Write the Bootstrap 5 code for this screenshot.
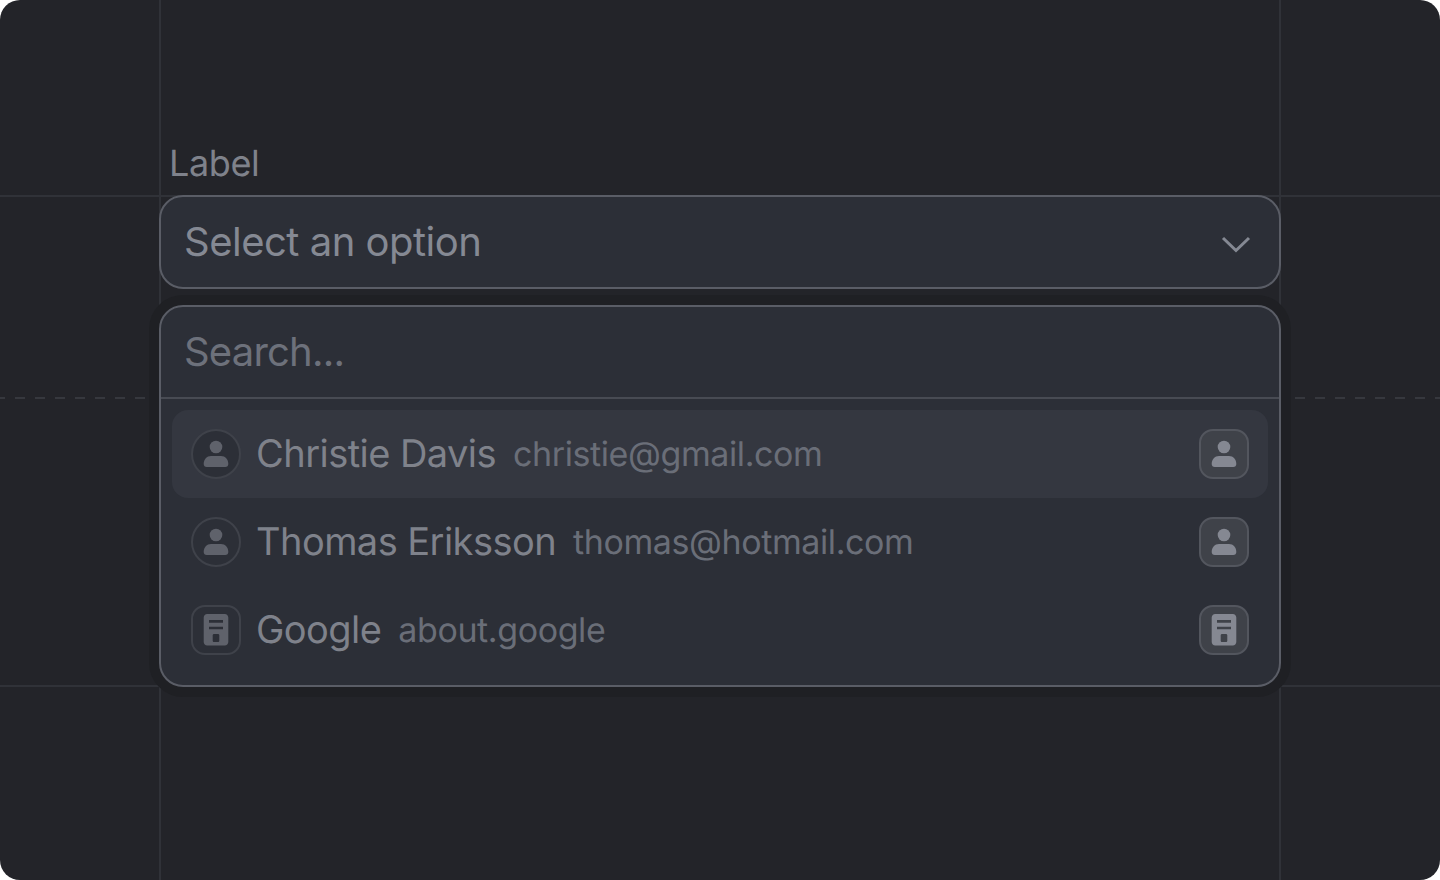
<!DOCTYPE html>
<html lang="en">
<head>
    <meta charset="UTF-8">
    <meta name="viewport" content="width=device-width, initial-scale=1.0">
    <title>Select</title>
    <link href="https://cdn.jsdelivr.net/npm/bootstrap@5.3.0/dist/css/bootstrap.min.css" rel="stylesheet">
    <style>
        html, body { height: 100%; background: #fff; overflow: hidden; }
        body { font-family: Inter, "Liberation Sans", sans-serif; text-rendering: geometricPrecision; }
        .stage { width: 1440px; height: 880px; background: #232429; border-radius: 20px; padding: 141px 159px 0; }
        .guide { position: absolute; background: #303238; }
        .guide-v { top: 0; bottom: 0; width: 2px; }
        .guide-h { left: 0; right: 0; height: 2px; }
        .guide-dash { left: 0; width: 160px; height: 2px; top: 397px; background: repeating-linear-gradient(90deg, #36383e 0 10px, transparent 10px 20px) 15px 0; }
        .guide-dash.right { left: auto; right: 0; }
        .field-label { display: block; margin: 0 0 10px 10px; font-size: 36px; line-height: 44px; letter-spacing: -.4px; color: #7f828b; }
        .picker { position: relative; z-index: 1; }
        .trigger { height: 94px; padding: 0 28px 0 23px; background: #2c2f37; border: 2px solid #5a5d66; border-radius: 24px; font-size: 40px; color: #858993; letter-spacing: -.5px; }
        .trigger:hover, .trigger:active { background: #2c2f37 !important; border-color: #5a5d66 !important; color: #858993 !important; }
        .trigger svg { margin-top: 3px; }
        .panel { margin-top: 16px; height: 382px; background: #2c2f37; border: 2px solid #5a5d66; border-radius: 24px; box-shadow: 0 0 0 10px #1f2024; }
        .search-box { height: 92px; padding: 0 23px 2px; background: transparent; border: 0; border-bottom: 2px solid #484b53; border-radius: 0; font-size: 40px; letter-spacing: -.8px; color: #6d717b; }
        .search-box::placeholder { color: #6d717b; opacity: 1; }
        .search-box:focus { background: transparent; box-shadow: none; border-color: #484b53; color: #6d717b; }
        .option-list { padding: 11px 11px 0; }
        .option-row { height: 88px; padding: 0 19px; border-radius: 16px; }
        .option-row.current { background: #343740; }
        .thumb { flex: none; width: 50px; height: 50px; border: 2px solid #3f424a; }
        .thumb svg { width: 28px; height: 32px; fill: #5f626b; }
        .thumb.boxed { border-radius: 14px; }
        .thumb.solid { background: #3f4249; border-color: #53565e; border-radius: 14px; }
        .thumb.solid svg { fill: #858892; }
        .option-row.current .thumb:not(.solid) { background: #2c2f37; }
        .who { margin: 0 0 0 15px; font-size: 38px; letter-spacing: -.55px; color: #7f828b; }
        .mail { margin: 0 0 0 17px; font-size: 34px; letter-spacing: -.4px; color: #6a6e78; }
    </style>
</head>
<body>

<svg width="0" height="0" class="d-block">
    <symbol id="ico-person" viewBox="0 0 28 32">
        <circle cx="14" cy="9" r="6.300"/>
        <path d="M9 18h10c4.200 0 7.300 3.400 7.300 8 0 1.800-1.200 3-3 3H4.700c-1.800 0-3-1.200-3-3 0-4.600 3.100-8 7.300-8z"/>
    </symbol>
    <symbol id="ico-office" viewBox="0 0 28 32">
        <path fill-rule="evenodd" d="M5.200 0h17.600c1.900 0 3.500 1.600 3.500 3.500v24.600c0 1.900-1.600 3.500-3.500 3.500H5.200c-1.900 0-3.500-1.600-3.500-3.500V3.500C1.700 1.600 3.300 0 5.200 0zM7 6v2.700h14V6zM7 12.700v2.600h14v-2.600zM12 20c-.7 0-1.300.6-1.300 1.300v5.400c0 .7.600 1.300 1.300 1.300h4c.7 0 1.300-.6 1.300-1.300v-5.400c0-.7-.6-1.300-1.300-1.300z"/>
    </symbol>
</svg>

<div class="stage position-relative">
    <div class="guide guide-v" style="left:159px"></div>
    <div class="guide guide-v" style="left:1279px"></div>
    <div class="guide guide-h" style="top:195px"></div>
    <div class="guide guide-h" style="top:685px"></div>
    <div class="guide guide-dash"></div>
    <div class="guide guide-dash right"></div>

    <div class="picker">
        <label class="field-label" for="pickerSearch">Label</label>
        <button type="button" class="btn trigger w-100 d-flex align-items-center justify-content-between">
            <span>Select an option</span>
            <svg width="30" height="18" viewBox="0 0 30 18" fill="none" stroke="#858993" stroke-width="3"><path d="M2 3l13 12.500L28 3"/></svg>
        </button>

        <div class="panel d-flex flex-column">
            <input id="pickerSearch" class="form-control search-box" type="text" placeholder="Search...">
            <div class="option-list">
                <div class="option-row current d-flex align-items-center">
                    <span class="thumb rounded-circle d-flex align-items-center justify-content-center"><svg><use href="#ico-person"/></svg></span>
                    <span class="who">Christie Davis</span>
                    <span class="mail">christie@gmail.com</span>
                    <span class="thumb solid d-flex align-items-center justify-content-center ms-auto"><svg><use href="#ico-person"/></svg></span>
                </div>
                <div class="option-row d-flex align-items-center">
                    <span class="thumb rounded-circle d-flex align-items-center justify-content-center"><svg><use href="#ico-person"/></svg></span>
                    <span class="who">Thomas Eriksson</span>
                    <span class="mail">thomas@hotmail.com</span>
                    <span class="thumb solid d-flex align-items-center justify-content-center ms-auto"><svg><use href="#ico-person"/></svg></span>
                </div>
                <div class="option-row d-flex align-items-center">
                    <span class="thumb boxed d-flex align-items-center justify-content-center"><svg><use href="#ico-office"/></svg></span>
                    <span class="who">Google</span>
                    <span class="mail">about.google</span>
                    <span class="thumb solid d-flex align-items-center justify-content-center ms-auto"><svg><use href="#ico-office"/></svg></span>
                </div>
            </div>
        </div>
    </div>
</div>

<script src="https://cdn.jsdelivr.net/npm/bootstrap@5.3.0/dist/js/bootstrap.bundle.min.js"></script>
</body>
</html>
